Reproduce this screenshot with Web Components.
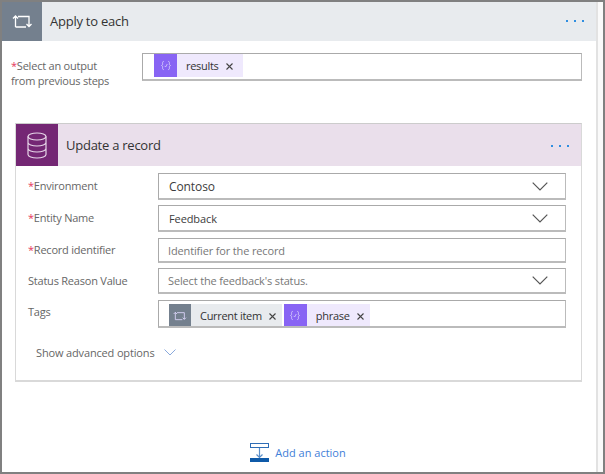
<!DOCTYPE html>
<html>
<head>
<meta charset="utf-8">
<title>Apply to each</title>
<style>
  html, body { margin: 0; height: 100%; overflow: hidden; background: #fff; }
  body { font-family: "Open Sans", "Noto Sans", sans-serif; font-size: 12px; color: #333; }
</style>
</head>
<body>

<flow-frame>
  <flow-card kind="loop" title="Apply to each">
    <flow-field required label="Select an output<br>from previous steps" variant="loop-row" top="12" height="28" pad="11">
      <flow-token kind="expr" tail="10">results</flow-token>
    </flow-field>
    <flow-card kind="data" title="Update a record" nested>
      <flow-field required label="Environment" height="27" top="7" arrow text="Contoso" size="12" pad="10" dark></flow-field>
      <flow-field required label="Entity Name" height="27" top="5" arrow text="Feedback" size="11" pad="10" dark></flow-field>
      <flow-field required label="Record identifier" height="25" top="6" labeltop="4" text="Identifier for the record"></flow-field>
      <flow-field label="Status Reason Value" height="26" top="5" arrow text="Select the feedback's status."></flow-field>
      <flow-field label="Tags" height="28" top="6" labeltop="4" tokens>
        <flow-token kind="loop">Current item</flow-token>
        <flow-token kind="expr">phrase</flow-token>
      </flow-field>
      <flow-advanced></flow-advanced>
    </flow-card>
  </flow-card>
  <add-action></add-action>
</flow-frame>

<script>
  const icons = {
    loop: `<path d="M3.500 13V2M1 4.500L3.500 2 6 4.500M6 2.500h11v10M14.500 10l2.500 2.500 2.500-2.500M3.500 13H14" fill="none" stroke="currentColor" stroke-width="1.300"/>`,
    expr: `<path d="M5 1.500c-2 0-1.500 2-1.500 3.500S3 6.500 2 7c1 .5 1.500.5 1.500 2S3 12.500 5 12.500M11 1.500c2 0 1.500 2 1.500 3.500s.5 1.500 1.500 2c-1 .5-1.500.5-1.500 2s.5 3.500-1.500 3.500M6.300 7.500l1.200 1.500L9.700 5" fill="none" stroke="currentColor" stroke-width="1"/>`,
    db: `<ellipse cx="10" cy="4.500" rx="9" ry="3.500" fill="none" stroke="currentColor" stroke-width="1.200"/><path d="M1 4.500v18c0 1.900 4 3.500 9 3.500s9-1.600 9-3.500v-18M1 10.500c0 1.900 4 3.500 9 3.500s9-1.600 9-3.500M1 16.500c0 1.900 4 3.500 9 3.500s9-1.600 9-3.500" fill="none" stroke="currentColor" stroke-width="1.200"/>`
  };

  // outer window border plus the pale strip down the right
  class FlowFrame extends HTMLElement {
    constructor() {
      super();
      const shadowRoot = this.attachShadow({ mode: 'open' });
      shadowRoot.innerHTML = `
      <style>
        :host {
          display: flex;
          box-sizing: border-box;
          width: 605px;
          height: 474px;
          border: 2px solid #808080;
          background: #fff;
        }
        .main { width: 594px; display: flex; flex-direction: column; }
        .strip { width: 7px; background: #fafafa; border-left: 2px solid #e2e2e2; box-sizing: border-box; }
      </style>
      <div class="main"><slot></slot></div>
      <div class="strip"></div>`;
    }
  }

  class FlowCard extends HTMLElement {
    constructor() {
      super();
      this.attachShadow({ mode: 'open' });
    }
    connectedCallback() {
      const nested = this.hasAttribute('nested');
      const kind = this.getAttribute('kind');
      const c = kind === 'loop'
        ? { tile: '#74808e', head: '#e8ebee', h: 39, t: 40, ic: '#fff' }
        : { tile: '#742774', head: '#eadfeb', h: 42, t: 42, ic: '#e6d6e8' };
      const glyph = kind === 'loop'
        ? `<svg width="21" height="15" viewBox="0 0 21 15">${icons.loop}</svg>`
        : `<svg width="20" height="27" viewBox="0 0 20 27">${icons.db}</svg>`;
      this.shadowRoot.innerHTML = `
      <style>
        :host {
          display: block;
          ${nested ? `margin: 35px 14px 0 13px; border: 1px solid #d9d9d9; border-top-color: #ccc; border-bottom-width: 2px; height: 256px;` : ''}
        }
        .head { display: flex; align-items: center; height: ${c.h}px; background: ${c.head}; }
        .tile { width: ${c.t}px; height: 100%; background: ${c.tile}; color: ${c.ic}; display: flex; align-items: center; justify-content: center; }
        .title { flex: 1; margin: ${nested ? '0 0 0 8px' : '0 0 2px 8px'}; font-size: 13px; letter-spacing: -.25px; color: #333; }
        .more { display: flex; gap: 6px; margin: ${nested ? '1px 12px 0 0' : '0 12px 2px 0'}; }
        .more i { width: 2px; height: 2px; background: #2f8ee0; }
        .body { padding-left: ${nested ? 12 : 0}px; }
      </style>
      <div class="head">
        <div class="tile">${glyph}</div>
        <div class="title">${this.getAttribute('title')}</div>
        <div class="more"><i></i><i></i><i></i></div>
      </div>
      <div class="body"><slot></slot></div>`;
    }
  }

  class FlowField extends HTMLElement {
    constructor() {
      super();
      this.attachShadow({ mode: 'open' });
    }
    connectedCallback() {
      const loopRow = this.getAttribute('variant') === 'loop-row';
      const hasTokens = this.hasAttribute('tokens');
      const h = this.getAttribute('height') || 29;
      const top = this.getAttribute('top') || 12;
      const star = this.hasAttribute('required') ? '<b>*</b>' : '';
      const text = this.getAttribute('text');
      const dark = this.hasAttribute('dark');
      const pad = this.getAttribute('pad') || (hasTokens ? 10 : 9);
      this.shadowRoot.innerHTML = `
      <style>
        :host {
          display: flex;
          margin-top: ${top}px;
          ${loopRow ? 'padding-left: 9px; margin-right: 14px;' : 'margin-right: 15px;'}
        }
        .label {
          width: ${loopRow ? 131 : 130}px;
          flex: none;
          font-size: 11px;
          letter-spacing: -.22px;
          line-height: 15px;
          color: #666;
          padding-top: ${this.getAttribute('labeltop') || 5}px;
        }
        .label b { color: #e5365b; font-weight: 400; }
        .box {
          flex: 1;
          box-sizing: border-box;
          height: ${h}px;
          border: 1px solid #aaa;
          border-right-color: #bbb;
          border-bottom: 2px solid #bbb;
          display: flex;
          align-items: ${loopRow || hasTokens ? 'flex-start' : 'center'};
          gap: 2px;
          padding-left: ${pad}px;
          overflow: hidden;
          ${hasTokens ? 'padding-top: 3px;' : ''}
          font-size: ${this.getAttribute('size') || 11}px;
          letter-spacing: ${dark ? -.1 : -.15}px;
          color: ${dark ? '#3c3c3c' : '#777'};
        }
        .box span { flex: 1; }
        svg { flex: none; margin-right: 17px; }
      </style>
      <div class="label">${star}${this.getAttribute('label')}</div>
      <div class="box">
        ${text ? `<span>${text}</span>` : '<slot></slot>'}
        ${this.hasAttribute('arrow') ? `<svg width="16" height="9" viewBox="0 0 16 9"><path d="M.700 .700L8 8l7.300-7.300" fill="none" stroke="#555" stroke-width="1.200"/></svg>` : ''}
      </div>`;
    }
  }

  class FlowToken extends HTMLElement {
    constructor() {
      super();
      this.attachShadow({ mode: 'open' });
    }
    connectedCallback() {
      const loop = this.getAttribute('kind') === 'loop';
      this.shadowRoot.innerHTML = `
      <style>
        :host {
          display: inline-flex;
          align-items: center;
          flex: none;
          height: 23px;
          background: ${loop ? '#e8ebee' : '#efe9fd'};
          font-size: 11px;
          letter-spacing: -.3px;
          color: #333;
        }
        .ic {
          width: ${loop ? 22 : 23}px;
          height: 100%;
          background: ${loop ? '#74808e' : '#8864f4'};
          color: #dcd6fa;
          display: flex;
          align-items: center;
          justify-content: center;
        }
        .name { margin-left: 9px; }
        svg.x { margin: 1px ${this.getAttribute('tail') || 6}px 0 7px; }
      </style>
      <div class="ic">${loop
        ? `<svg width="14" height="10" viewBox="0 0 21 15">${icons.loop}</svg>`
        : `<svg width="12" height="11" viewBox="0 0 16 14">${icons.expr}</svg>`}</div>
      <span class="name"><slot></slot></span>
      <svg class="x" width="7" height="7" viewBox="0 0 7 7"><path d="M.500 .500l6 6M6.500 .500l-6 6" stroke="#444" stroke-width="1.100"/></svg>`;
    }
  }

  class FlowAdvanced extends HTMLElement {
    constructor() {
      super();
      const shadowRoot = this.attachShadow({ mode: 'open' });
      shadowRoot.innerHTML = `
      <style>
        :host {
          display: flex;
          align-items: center;
          gap: 9px;
          margin: 17px 0 0 8px;
          font-size: 11px;
          letter-spacing: -.15px;
          color: #666;
        }
      </style>
      <span>Show advanced options</span>
      <svg width="12" height="7" viewBox="0 0 12 7"><path d="M.500 .500L6 6l5.500-5.500" fill="none" stroke="#8aa9dc" stroke-width="1"/></svg>`;
    }
  }

  class AddAction extends HTMLElement {
    constructor() {
      super();
      const shadowRoot = this.attachShadow({ mode: 'open' });
      shadowRoot.innerHTML = `
      <style>
        :host {
          display: flex;
          align-items: center;
          justify-content: center;
          gap: 6px;
          margin-top: 61px;
          padding-right: 2px;
          font-size: 11px;
          color: #3f80d8;
        }
      </style>
      <svg width="19" height="19" viewBox="0 0 19 19">
        <rect x=".500" y=".500" width="18" height="4" fill="#fff" stroke="#2f6db5"/>
        <path d="M9.500 5v9M6.500 11.500l3 3 3-3" fill="none" stroke="#5b8fc9" stroke-width="1.200"/>
        <rect y="15" width="19" height="4" fill="#0f5aa8"/>
      </svg>
      <span>Add an action</span>`;
    }
  }

  customElements.define('flow-frame', FlowFrame);
  customElements.define('flow-card', FlowCard);
  customElements.define('flow-field', FlowField);
  customElements.define('flow-token', FlowToken);
  customElements.define('flow-advanced', FlowAdvanced);
  customElements.define('add-action', AddAction);
</script>
</body>
</html>
